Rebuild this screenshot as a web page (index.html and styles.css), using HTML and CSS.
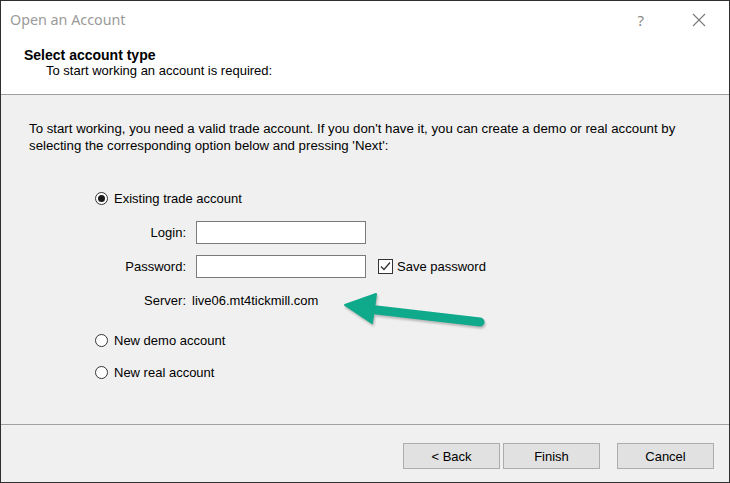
FILE: index.html
```html
<!DOCTYPE html>
<html lang="en">
<head>
    <meta charset="UTF-8">
    <title>Open an Account</title>
    <link rel="stylesheet" href="styles.css">
</head>
<body>
    <div class="window">
        <div class="titlebar">
            <span class="title">Open an Account</span>
            <span class="help">?</span>
            <svg class="close" width="14" height="14" viewBox="0 0 14 14">
                <path d="M1 1 L13 13 M13 1 L1 13" stroke="#7a7a7a" stroke-width="1.1" fill="none"/>
            </svg>
        </div>
        <div class="header">
            <div class="header-title">Select account type</div>
            <div class="header-sub">To start working an account is required:</div>
        </div>
        <div class="content">
            <p class="intro">To start working, you need a valid trade account. If you don't have it, you can create a demo or real account by selecting the corresponding option below and pressing 'Next':</p>

            <label class="radio-row first"><span class="radio checked"></span>Existing trade account</label>

            <div class="form">
                <span class="lbl">Login:</span>
                <span class="input"></span>
                <span></span>

                <span class="lbl">Password:</span>
                <span class="input"></span>
                <label class="check-row"><span class="checkbox">
                    <svg width="13" height="13" viewBox="0 0 13 13"><path d="M2 6.5 L5 9.5 L11 2.5" stroke="#333" stroke-width="1.3" fill="none"/></svg>
                </span>Save password</label>

                <span class="lbl">Server:</span>
                <span class="server">live06.mt4tickmill.com</span>
                <span></span>
            </div>

            <label class="radio-row demo"><span class="radio"></span>New demo account</label>
            <label class="radio-row real"><span class="radio"></span>New real account</label>
        </div>
        <div class="footer">
            <button class="btn">&lt; Back</button>
            <button class="btn">Finish</button>
            <button class="btn cancel">Cancel</button>
        </div>

        <!-- annotation arrow drawn over the dialog -->
        <svg class="arrow" width="730" height="483" viewBox="0 0 730 483">
            <g fill="#0fa98b" stroke="#0fa98b">
                <line x1="368" y1="309" x2="480" y2="322" stroke-width="9" stroke-linecap="round"/>
                <polygon points="345,305 376,294 372,323" stroke-width="2" stroke-linejoin="round"/>
            </g>
        </svg>
    </div>
</body>
</html>
```

FILE: styles.css
```css
body { margin: 0; padding: 0; font-family: "Liberation Sans", Arial, sans-serif; font-size: 13px; color: #000; }

.window {
    position: relative;
    width: 730px;
    height: 483px;
    box-sizing: border-box;
    border: 1px solid #2f2f2f;
    background: #f0f0f0;
    display: flex;
    flex-direction: column;
    overflow: hidden;
}

/* title bar */
.titlebar { height: 39px; background: #fff; display: flex; align-items: center; padding-left: 9px; }
.title { font-family: "Noto Sans", sans-serif; font-size: 14.3px; color: #9a9a9a; flex: 1; margin-top: -2px; }
.help { font-family: "Noto Sans", sans-serif; font-size: 15px; color: #8a8a8a; margin-right: 48px; margin-top: -2px; }
.close { margin-right: 23px; margin-top: -2px; }

/* header */
.header { height: 55px; background: #fff; border-bottom: 1px solid #a0a0a0; padding: 7px 0 0 23px; box-sizing: border-box; }
.header-title { font-weight: bold; font-size: 14px; line-height: 16px; }
.header-sub { line-height: 16px; padding-left: 22px; }

/* content */
.content { flex: 1; padding: 0 0 0 28px; }
.intro { margin: 25px 0 0 0; line-height: 17px; width: 680px; font-size: 13.25px; }

.radio-row { display: flex; align-items: center; margin-left: 66px; height: 16px; }
.radio-row.first { margin-top: 36px; }
.radio-row.demo { margin-top: 20px; }
.radio-row.real { margin-top: 16px; }
.radio {
    width: 13px; height: 13px; box-sizing: border-box;
    border: 1px solid #333; border-radius: 50%; background: #fff;
    margin-right: 6px; display: flex; align-items: center; justify-content: center;
}
.radio.checked::after { content: ""; width: 7px; height: 7px; border-radius: 50%; background: #1a1a1a; }

.form {
    display: grid;
    grid-template-columns: 157px 170px auto;
    column-gap: 10px;
    row-gap: 11px;
    align-items: center;
    margin-top: 15px;
}
.lbl { text-align: right; }
.input { height: 23px; box-sizing: border-box; border: 1px solid #7a7a7a; background: #fff; }
.server { height: 23px; line-height: 23px; margin-left: -4px; }

.check-row { display: flex; align-items: center; margin-left: 2px; }
.checkbox {
    width: 15px; height: 15px; box-sizing: border-box;
    border: 1px solid #333; background: #fff; margin-right: 4px;
    display: flex; align-items: center; justify-content: center;
}

/* footer */
.footer {
    height: 58px;
    border-top: 1px solid #a0a0a0;
    display: flex;
    justify-content: flex-end;
    align-items: flex-start;
    padding: 18px 15px 0 0;
    box-sizing: border-box;
}
.btn {
    width: 97px; height: 26px;
    background: #e1e1e1; border: 1px solid #adadad;
    font-family: "Liberation Sans", Arial, sans-serif; font-size: 13px; color: #000;
    margin-left: 3px; padding: 0;
}
.btn.cancel { margin-left: 17px; }

.arrow { position: absolute; left: -1px; top: -1px; pointer-events: none; filter: drop-shadow(1px 2px 1px rgba(0,0,0,0.25)); }
```
